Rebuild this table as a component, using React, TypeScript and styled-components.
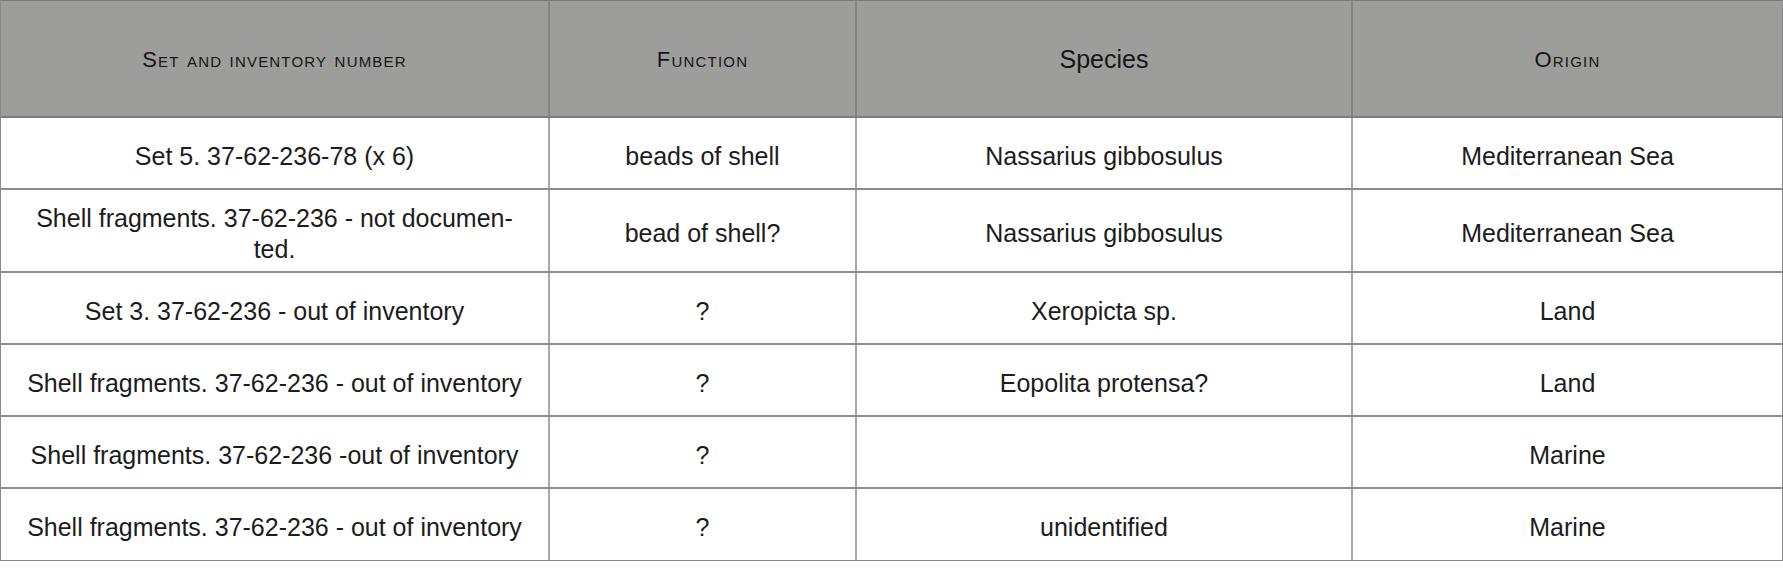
import React from "react";
import styled, { createGlobalStyle } from "styled-components";

const GlobalStyle = createGlobalStyle`
  html, body {
    margin: 0;
    padding: 0;
    background: #ffffff;
  }
  body {
    font-family: "Liberation Sans", Arial, Helvetica, sans-serif;
    color: #1c1c1c;
  }
`;

type Row = {
  set: React.ReactNode;
  fn: string;
  species: string;
  origin: string;
  tall?: boolean;
};

const rows: Row[] = [
  {
    set: "Set 5. 37-62-236-78 (x 6)",
    fn: "beads of shell",
    species: "Nassarius gibbosulus",
    origin: "Mediterranean Sea",
  },
  {
    set: (
      <>
        Shell fragments. 37-62-236 - not documen-
        <br />
        ted.
      </>
    ),
    fn: "bead of shell?",
    species: "Nassarius gibbosulus",
    origin: "Mediterranean Sea",
    tall: true,
  },
  {
    set: "Set 3. 37-62-236 - out of inventory",
    fn: "?",
    species: "Xeropicta sp.",
    origin: "Land",
  },
  {
    set: "Shell fragments. 37-62-236 - out of inventory",
    fn: "?",
    species: "Eopolita protensa?",
    origin: "Land",
  },
  {
    set: "Shell fragments. 37-62-236 -out of inventory",
    fn: "?",
    species: "",
    origin: "Marine",
  },
  {
    set: "Shell fragments. 37-62-236 - out of inventory",
    fn: "?",
    species: "unidentified",
    origin: "Marine",
  },
];

export default function App() {
  return (
    <>
      <GlobalStyle />
      <Table>
        <HeaderRow>
          <HeadCell>Set and inventory number</HeadCell>
          <HeadCell>Function</HeadCell>
          <HeadCell $plain>Species</HeadCell>
          <HeadCell>Origin</HeadCell>
        </HeaderRow>
        {rows.map((row, i) => (
          <BodyRow key={i} $tall={row.tall}>
            <Cell>{row.set}</Cell>
            <Cell>{row.fn}</Cell>
            <Cell>{row.species}</Cell>
            <Cell>{row.origin}</Cell>
          </BodyRow>
        ))}
      </Table>
    </>
  );
}

const Table = styled.div`
  width: 1783px;
  box-sizing: border-box;
  border: 1px solid #8a8a8a;
  border-top-color: #7a7a7a;
`;

const HeaderRow = styled.div`
  display: grid;
  grid-template-columns: 547px 307px 496px 1fr;
  height: 117px;
  box-sizing: border-box;
  background: #9d9d9c;
  border-bottom: 2px solid #7c7c7c;

  & > div + div {
    border-left: 2px solid #858585;
  }
`;

const HeadCell = styled.div<{ $plain?: boolean }>`
  display: flex;
  align-items: center;
  justify-content: center;
  font-size: ${(p) => (p.$plain ? "25px" : "22px")};
  font-variant: ${(p) => (p.$plain ? "normal" : "small-caps")};
  letter-spacing: ${(p) => (p.$plain ? "0" : "1.2px")};
  color: #161616;
  padding-top: 2px;
`;

const BodyRow = styled.div<{ $tall?: boolean }>`
  display: grid;
  grid-template-columns: 547px 307px 496px 1fr;
  height: ${(p) => (p.$tall ? "83px" : "72px")};
  box-sizing: border-box;
  border-bottom: 2px solid #8c8c8c;

  &:last-child {
    border-bottom: none;
    height: 71px;
  }

  & > div + div {
    border-left: 2px solid #a8a8a8;
  }
`;

const Cell = styled.div`
  display: flex;
  align-items: center;
  justify-content: center;
  text-align: center;
  padding: 6px 10px 0;
  font-size: 25px;
  line-height: 31px;
  white-space: nowrap;
  color: #1c1c1c;
`;
